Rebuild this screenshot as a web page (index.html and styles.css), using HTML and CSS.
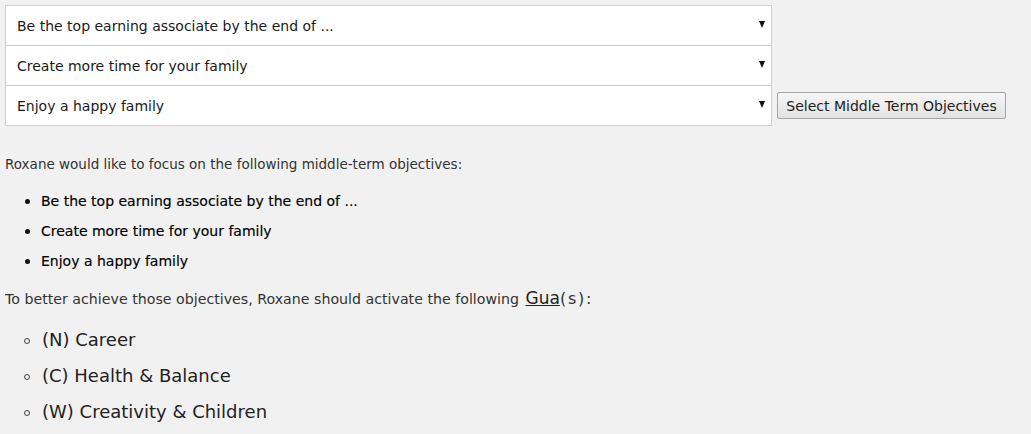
FILE: index.html
```html
<!DOCTYPE html>
<html><head><meta charset="utf-8"><link rel="stylesheet" href="styles.css"></head>
<body>
<div class="selects">
  <div class="row"><div class="select"><span class="val">Be the top earning associate by the end of ...</span><span class="arrow"></span></div></div>
  <div class="row"><div class="select"><span class="val">Create more time for your family</span><span class="arrow"></span></div></div>
  <div class="row"><div class="select"><span class="val">Enjoy a happy family</span><span class="arrow"></span></div><button class="btn">Select Middle Term Objectives</button></div>
</div>
<p class="intro">Roxane would like to focus on the following middle-term objectives:</p>
<ul class="objectives">
  <li>Be the top earning associate by the end of ...</li>
  <li>Create more time for your family</li>
  <li>Enjoy a happy family</li>
</ul>
<p class="intro2">To better achieve those objectives, Roxane should activate the following <span class="gua">Gua</span><span class="s">(s):</span></p>
<ul class="guas">
  <li>(N) Career</li>
  <li>(C) Health &amp; Balance</li>
  <li>(W) Creativity &amp; Children</li>
</ul>
</body></html>
```
FILE: styles.css
```css
body{margin:5px;background:#f1f1f1;font-family:"DejaVu Sans",sans-serif;color:#222}
.selects{display:flex;flex-direction:column}
.row{display:flex;align-items:center}
.row+.row{margin-top:-1px}
.select{width:748px;height:39px;background:#fff;border:1px solid #cfcfcf;display:flex;align-items:center;justify-content:space-between;padding:0 6px 0 11px;box-sizing:content-box;font-size:14px;color:#1a1a1a}
.arrow{width:0;height:0;border-left:3.5px solid transparent;border-right:3.5px solid transparent;border-top:7px solid #111;margin-top:-2px}
.btn{margin-left:5px;height:27px;width:229px;padding:0;font-family:inherit;font-size:14px;color:#222;border:1px solid #a4a4a4;border-radius:2px;background:linear-gradient(#f7f7f7,#e1e1e1)}
.intro{margin:28px 0 0;font-size:13.5px;line-height:20px;color:#333}
.objectives{list-style:none;margin:17px 0 0;padding:0 0 0 20px}
.objectives li{font-size:14px;line-height:20px;margin-bottom:10px;color:#000;display:flex;align-items:center;-webkit-text-stroke:0.15px #000}
.objectives li::before{content:"";width:5px;height:5px;border-radius:50%;background:#111;margin-right:11px}
.intro2{margin:17px 0 0;font-size:14.2px;line-height:20px;color:#333}
.gua{font-size:17px;text-decoration:underline;color:#222;margin-left:2px}
.s{font-size:16px;letter-spacing:1.8px}
.guas{list-style:none;margin:18px 0 0;padding:0 0 0 19px}
.guas li{font-size:18px;line-height:26px;margin-bottom:10px;color:#222;display:flex;align-items:center}
.guas li::before{content:"";width:4px;height:4px;border-radius:50%;border:1.3px solid #444;margin-right:12px;margin-top:2px}
```
